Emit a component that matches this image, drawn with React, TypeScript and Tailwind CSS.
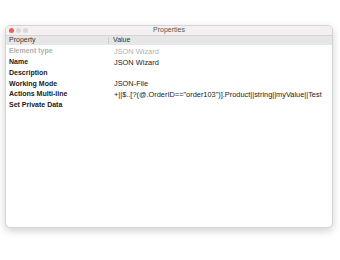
import React from "react";

const rows: { k: string; v: string; dim?: boolean }[] = [
  { k: "Element type", v: "JSON Wizard", dim: true },
  { k: "Name", v: "JSON Wizard" },
  { k: "Description", v: "" },
  { k: "Working Mode", v: "JSON-File" },
  { k: "Actions Multi-line", v: '+||$..[?(@.OrderID=="order103")].Product||string||myValue||Test' },
  { k: "Set Private Data", v: "" },
];

export default function App() {
  return (
    <div className="w-[340px] h-[260px] bg-white pt-[25px] pl-[5px]" style={{ fontFamily: '"Liberation Sans", Arial, sans-serif' }}>
      <div className="w-[328px] h-[203px] rounded-[5px] bg-white border border-[#d4d4d4] shadow-[0_3px_8px_rgba(0,0,0,0.18)] overflow-hidden flex flex-col">
        <div className="h-[10px] shrink-0 bg-[#f4eff0] border-b border-[#d8d4d5] flex items-center relative">
          <div className="flex gap-[2px] pl-[3px]">
            <div className="w-[5px] h-[5px] rounded-full bg-[#ee5d56]" />
            <div className="w-[5px] h-[5px] rounded-full bg-[#dcd7d8]" />
            <div className="w-[5px] h-[5px] rounded-full bg-[#dcd7d8]" />
          </div>
          <div className="absolute inset-0 flex items-center justify-center text-[7px] text-[#555]">Properties</div>
        </div>
        <div className="h-[9px] shrink-0 bg-[#e6e6e6] flex items-center text-[7px] text-[#333]">
          <div className="w-[103px] shrink-0 pl-[3px] border-r border-[#cfcfcf] h-[7px] flex items-center">Property</div>
          <div className="pl-[4px]">Value</div>
        </div>
        <div className="flex flex-col pt-[1px]">
          {rows.map((r) => (
            <div key={r.k} className="h-[10.8px] flex items-center">
              <div className={`w-[104px] shrink-0 pl-[3px] text-[7px] font-bold ${r.dim ? "text-[#b0b0b0]" : "text-[#1a1a1a]"}`}>{r.k}</div>
              <div className={`pl-[4px] text-[7.4px] whitespace-nowrap ${r.dim ? "text-[#b0b0b0]" : "text-[#1a1a1a]"}`}>{r.v}</div>
            </div>
          ))}
        </div>
      </div>
    </div>
  );
}
